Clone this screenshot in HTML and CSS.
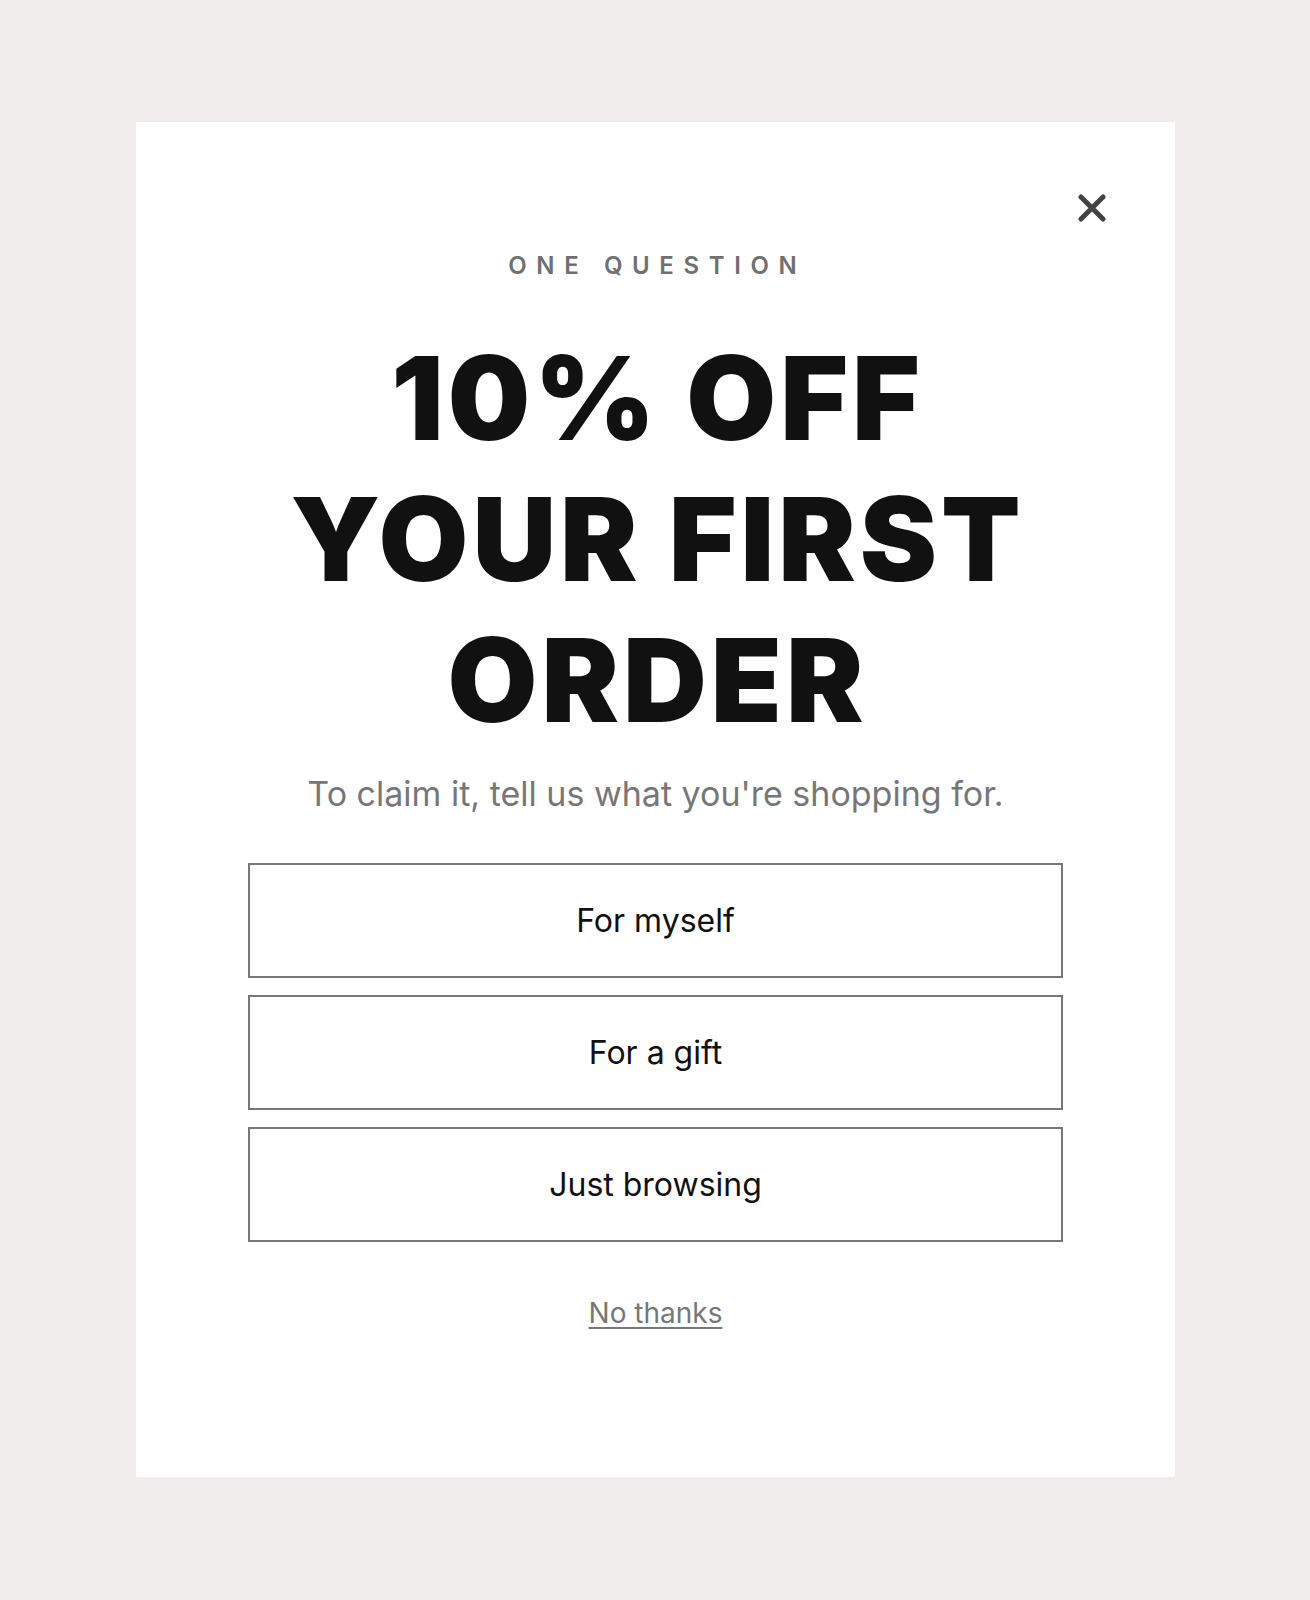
FILE: index.html
```html
<!doctype html>
<html lang="en">
<head>
    <meta charset="UTF-8">
    <meta name="viewport" content="width=device-width, initial-scale=1.0">
    <title>One question</title>
    <link rel="stylesheet" href="styles.css">
</head>
<body>
<div class="modal">
    <button class="close" aria-label="Close">
        <svg width="28" height="28" viewBox="0 0 28 28">
            <path d="M3 3 L25 25 M25 3 L3 25" stroke="#444" stroke-width="5" stroke-linecap="round" fill="none"/>
        </svg>
    </button>
    <div class="eyebrow">ONE QUESTION</div>
    <h1 class="title">10% OFF<br>YOUR FIRST<br>ORDER</h1>
    <p class="lead">To claim it, tell us what you're shopping for.</p>
    <div class="options">
        <button class="option">For myself</button>
        <button class="option">For a gift</button>
        <button class="option">Just browsing</button>
    </div>
    <a class="skip" href="#">No thanks</a>
</div>
</body>
</html>
```

FILE: styles.css
```css
body{ margin: 0; background: #efeeeb; font-family: Inter, "Noto Sans", sans-serif; }
.modal{ position: relative; box-sizing: border-box; width: 1039px; height: 1355px; margin: 122px 0 0 136px; background: #fff; padding: 129px 112px 0; display: flex; flex-direction: column; align-items: center; }
.close{ position: absolute; top: 72px; left: 942px; width: 28px; height: 28px; padding: 0; border: 0; background: none; cursor: pointer; }
.close svg{ display: block; }
.eyebrow{ font-size: 24px; font-weight: 600; letter-spacing: 0.4em; color: #707070; line-height: 30px; margin-right: -0.4em; position: relative; left: -3px; }
.title{ margin: 47px 0 0; font-size: 116px; font-weight: 900; line-height: 141px; color: #111; text-align: center; letter-spacing: 4px; margin-right: -4px; }
.lead{ margin: 20px 0 0; font-size: 34px; color: #777; line-height: 46px; }
.options{ width: 100%; margin-top: 46px; display: flex; flex-direction: column; gap: 17px; }
.option{ height: 115px; border: 2px solid #777; background: #fff; font-family: Inter, "Noto Sans", sans-serif; font-size: 32px; color: #111; cursor: pointer; }
.skip{ margin-top: 54px; font-size: 28px; color: #777; text-decoration: underline; text-underline-offset: 4px; }
```
